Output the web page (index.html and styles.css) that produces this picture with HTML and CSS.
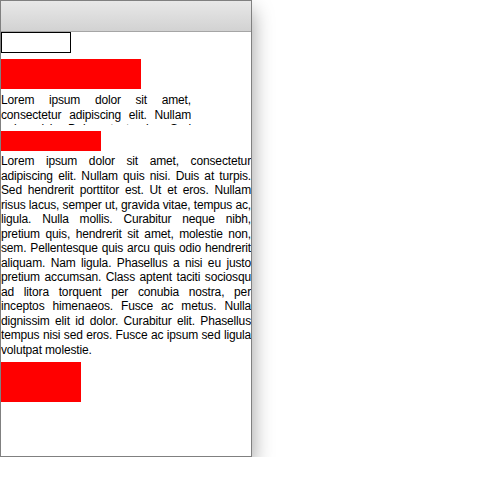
FILE: index.html
```html
<!DOCTYPE html>
<html>
<head>
<meta charset="utf-8">
<link rel="stylesheet" href="styles.css">
</head>
<body>
<div class="window">
  <div class="titlebar"></div>
  <div class="content">
    <div class="field"></div>
    <div class="box box-wide"></div>
    <p class="text text-clipped">Lorem ipsum dolor sit amet, consectetur adipiscing elit. Nullam quis nisi. Duis at turpis. Sed hendrerit porttitor est. Ut et eros.</p>
    <div class="box box-mid"></div>
    <p class="text text-full">Lorem ipsum dolor sit amet, consectetur adipiscing elit. Nullam quis nisi. Duis at turpis. Sed hendrerit porttitor est. Ut et eros. Nullam risus lacus, semper ut, gravida vitae, tempus ac, ligula. Nulla mollis. Curabitur neque nibh, pretium quis, hendrerit sit amet, molestie non, sem. Pellentesque quis arcu quis odio hendrerit aliquam. Nam ligula. Phasellus a nisi eu justo pretium accumsan. Class aptent taciti sociosqu ad litora torquent per conubia nostra, per inceptos himenaeos. Fusce ac metus. Nulla dignissim elit id dolor. Curabitur elit. Phasellus tempus nisi sed eros. Fusce ac ipsum sed ligula volutpat molestie.</p>
    <div class="box box-small"></div>
  </div>
</div>
</body>
</html>
```
FILE: styles.css
```css
html, body {
  margin: 0;
  padding: 0;
  background: #ffffff;
}

.window {
  width: 250px;
  height: 455px;
  border: 1px solid #808080;
  background: #ffffff;
  box-shadow: 0 10px 20px rgba(0, 0, 0, 0.4);
  display: flex;
  flex-direction: column;
  overflow: hidden;
}

.titlebar {
  height: 30px;
  flex: none;
  background: linear-gradient(#e8e8e8, #d2d2d2);
  border-bottom: 1px solid #a6a6a6;
}

.content {
  flex: 1;
  overflow: hidden;
  font-family: "Liberation Sans", Arial, sans-serif;
  font-size: 12px;
  letter-spacing: -0.15px;
  color: #000000;
}

.field {
  width: 68px;
  height: 19px;
  border: 1px solid #000000;
}

.box {
  background: #ff0000;
}

.box-wide {
  width: 140px;
  height: 30px;
  margin-top: 6px;
}

.box-mid {
  width: 100px;
  height: 20px;
  margin-top: 6px;
}

.box-small {
  width: 80px;
  height: 40px;
  margin-top: 5px;
}

.text {
  margin: 0;
  line-height: 14.5px;
  text-align: justify;
}

.text-clipped {
  width: 190px;
  height: 32px;
  margin-top: 4px;
  overflow: hidden;
}

.text-full {
  width: 250px;
  margin-top: 3px;
}
```
